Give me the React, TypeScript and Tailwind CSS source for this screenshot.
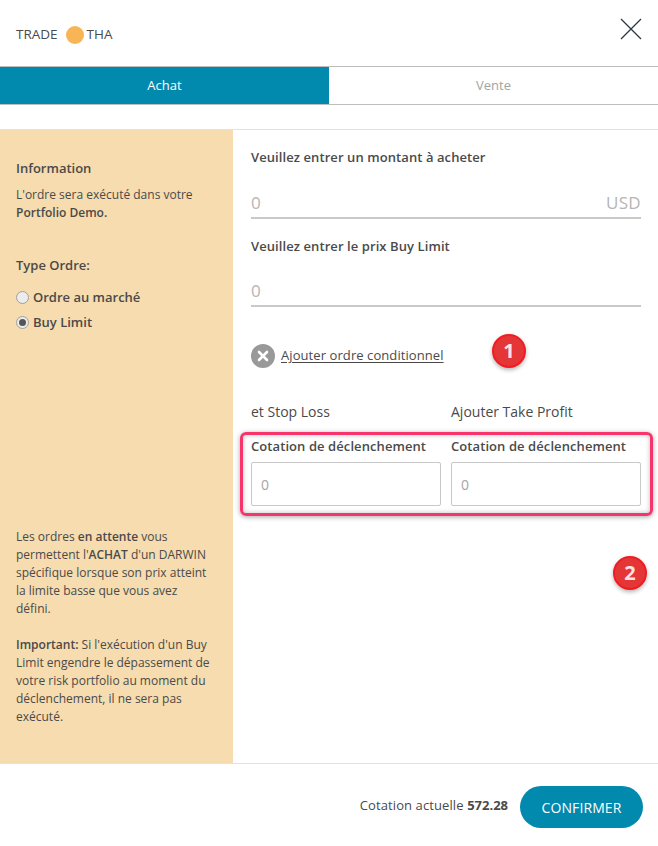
import React from "react";

const font = { fontFamily: '"Open Sans", sans-serif' };

function Badge({ n, className }: { n: string; className: string }) {
  return (
    <div
      className={`absolute flex h-[34px] w-[34px] items-center justify-center rounded-full border-2 border-[#f01c22] bg-[#e43636] text-[20px] font-bold text-[#fbe3e3] shadow-[0_2px_4px_rgba(0,0,0,0.3)] ${className}`}
    >
      {n}
    </div>
  );
}

function TriggerField() {
  return (
    <div className="w-[190px]">
      <div className="text-[13px] font-semibold leading-[18px] tracking-[0.08px] text-[#4a4a4a] whitespace-nowrap">Cotation de déclenchement</div>
      <div className="mt-[7px] flex h-[44px] items-center rounded-[2px] border border-[#c9c9c9] bg-white pl-[9px] text-[14px] text-[#a5a5a5]">0</div>
    </div>
  );
}

export default function App() {
  return (
    <div className="relative flex h-[846px] w-[658px] flex-col overflow-hidden bg-white text-[#4a4a4a]" style={font}>
      {/* header */}
      <header className="flex h-[66px] items-center justify-between pl-[16px] pr-[16px] pt-[3px]">
        <div className="flex items-center text-[13.5px] text-[#4a4a4a]">
          <span>TRADE</span>
          <span className="ml-[8px] h-[18px] w-[18px] rounded-full bg-[#f7b556]" />
          <span className="ml-[3px]">THA</span>
        </div>
        <svg width="22" height="22" viewBox="0 0 22 22" className="mb-[11px]" fill="none" stroke="#2b3a42" strokeWidth="1.3">
          <path d="M1 1 L21 21 M21 1 L1 21" />
        </svg>
      </header>

      {/* tabs */}
      <div className="flex h-[39px] border-y border-[#bdbdbd] text-[13px]">
        <div className="flex w-[329px] items-center justify-center bg-[#0289ae] text-white">Achat</div>
        <div className="flex flex-1 items-center justify-center text-[#a3a3a3]">Vente</div>
      </div>

      <div className="h-[24px]" />

      {/* body */}
      <div className="flex h-[635px] border-y border-[#e2e2e2]">
        <aside className="flex w-[233px] flex-col justify-between bg-[#f6dcae] pb-[37px] pl-[16px] pr-[18px] pt-[29px] text-[12px] leading-[18px]">
          <div>
            <div className="text-[13px] font-semibold leading-[18px]">Information</div>
            <p className="mt-[9px]">
              L'ordre sera exécuté dans votre <span className="font-semibold">Portfolio Demo.</span>
            </p>
            <div className="mt-[34px] text-[13px] font-semibold">Type Ordre:</div>
            <label className="mt-[14px] flex items-center text-[13px] font-semibold">
              <span className="mr-[4px] h-[13px] w-[13px] rounded-full border border-[#a0a0a0] bg-[#ececec]" />
              Ordre au marché
            </label>
            <label className="mt-[7px] flex items-center text-[13px] font-semibold">
              <span className="mr-[4px] flex h-[13px] w-[13px] items-center justify-center rounded-full border border-[#a0a0a0] bg-[#ececec]">
                <span className="h-[7px] w-[7px] rounded-full bg-[#555]" />
              </span>
              Buy Limit
            </label>
          </div>
          <div>
            <p>
              Les ordres <span className="font-semibold">en attente</span> vous permettent l'<span className="font-semibold">ACHAT</span> d'un DARWIN spécifique lorsque son prix atteint la limite basse que vous avez défini.
            </p>
            <p className="mt-[18px]">
              <span className="font-semibold">Important:</span> Si l'exécution d'un Buy Limit engendre le dépassement de votre risk portfolio au moment du déclenchement, il ne sera pas exécuté.
            </p>
          </div>
        </aside>

        <main className="flex-1 pl-[18px] pr-[17px] pt-[18px]">
          <div className="text-[13px] font-semibold leading-[18px] tracking-[0.08px]">Veuillez entrer un montant à acheter</div>
          <div className="mt-[24px] flex h-[29px] items-center justify-between border-b-2 border-[#c9c9c9] pb-[2px] text-[17px] text-[#b5b5b5]">
            <span>0</span>
            <span className="tracking-[0.3px]">USD</span>
          </div>
          <div className="mt-[18px] text-[13px] font-semibold leading-[18px] tracking-[0.08px]">Veuillez entrer le prix Buy Limit</div>
          <div className="mt-[23px] flex h-[29px] items-center border-b-2 border-[#c9c9c9] pb-[2px] text-[17px] text-[#b5b5b5]">0</div>

          <div className="mt-[37px] flex items-center">
            <span className="flex h-[24px] w-[24px] items-center justify-center rounded-full bg-[#999]">
              <svg width="12" height="12" viewBox="0 0 12 12" fill="none" stroke="#fff" strokeWidth="2.6" strokeLinecap="round">
                <path d="M2 2 L10 10 M10 2 L2 10" />
              </svg>
            </span>
            <span className="mb-[2px] ml-[6px] text-[13px] leading-[18px] tracking-[0.08px] underline underline-offset-2">Ajouter ordre conditionnel</span>
          </div>

          <div className="mt-[34px] flex gap-[10px] text-[14px] leading-[20px]">
            <div className="w-[190px]">et Stop Loss</div>
            <div className="w-[190px]">Ajouter Take Profit</div>
          </div>
          <div className="mt-[15px] flex gap-[10px]">
            <TriggerField />
            <TriggerField />
          </div>
        </main>
      </div>

      {/* footer */}
      <footer className="flex flex-1 items-center justify-end pr-[15px] pt-[4px]">
        <span className="mb-[3px] text-[13px] tracking-[0.1px]">
          Cotation actuelle <span className="font-bold tracking-normal">572.28</span>
        </span>
        <button className="ml-[12px] h-[42px] w-[123px] rounded-full bg-[#0289ae] text-[14px] tracking-[0.1px] text-white">CONFIRMER</button>
      </footer>

      {/* annotations */}
      <div className="absolute left-[240px] top-[432px] h-[84px] w-[413px] rounded-[6px] border-[3px] border-[#f7346b] shadow-[0_1px_5px_rgba(0,0,0,0.35),inset_0_0_5px_rgba(0,0,0,0.25)]" />
      <Badge n="1" className="left-[492px] top-[334px]" />
      <Badge n="2" className="left-[613px] top-[556px]" />
    </div>
  );
}
